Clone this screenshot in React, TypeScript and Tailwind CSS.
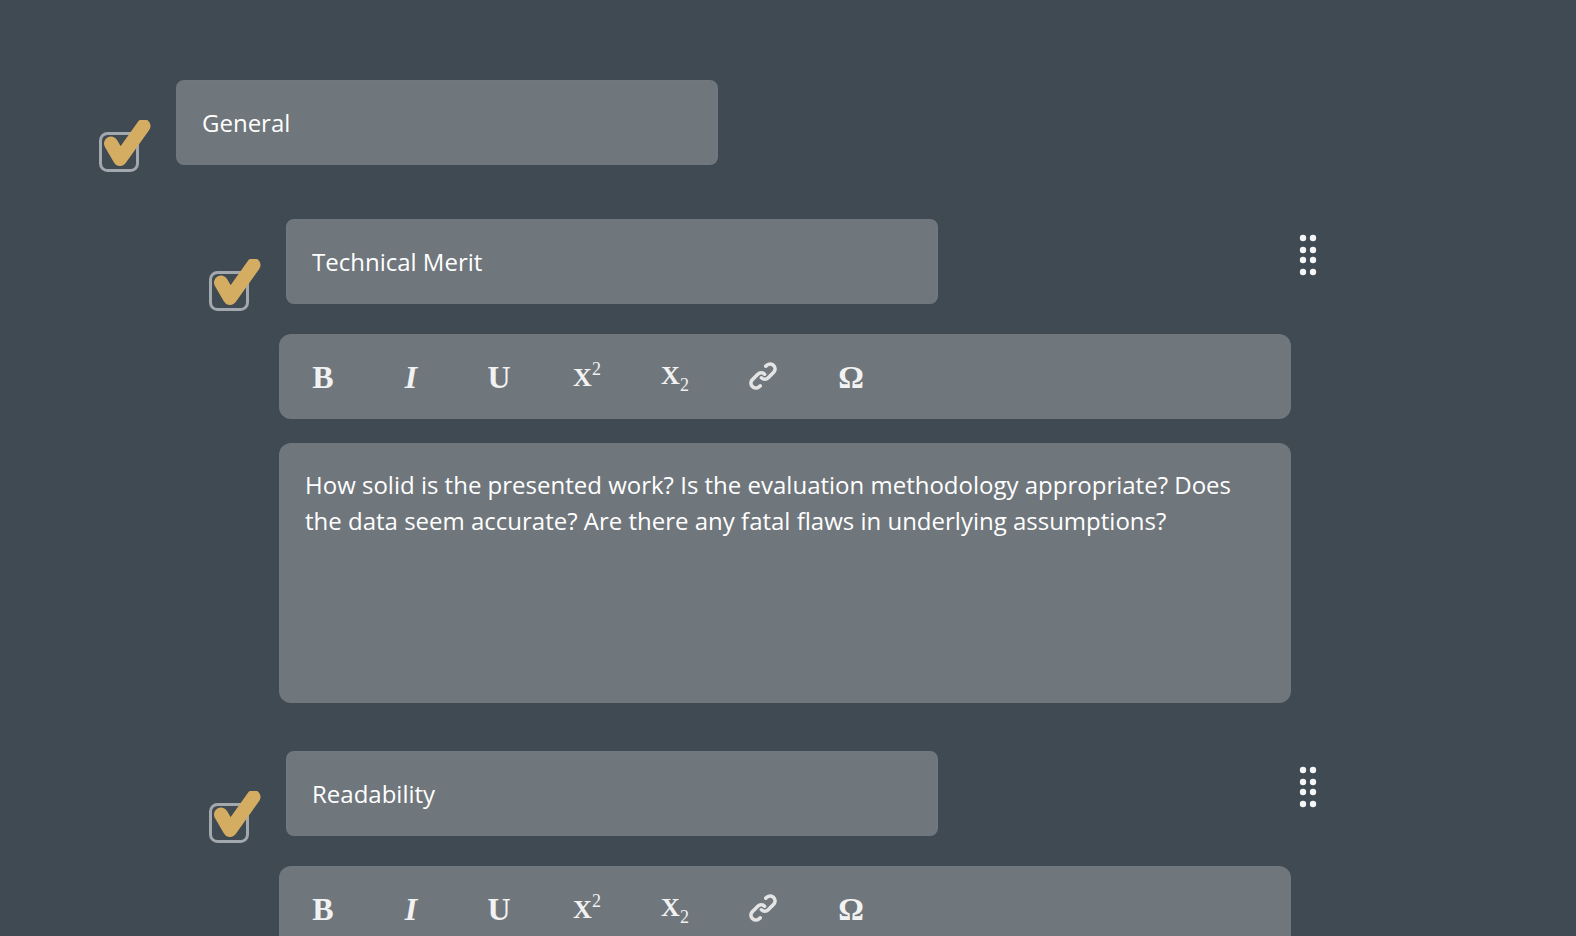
import { useState } from "react";

type Criterion = {
  id: string;
  title: string;
  description: string;
};

const initialCriteria: Criterion[] = [
  {
    id: "technical-merit",
    title: "Technical Merit",
    description:
      "How solid is the presented work? Is the evaluation methodology appropriate? Does the data seem accurate? Are there any fatal flaws in underlying assumptions?",
  },
  { id: "readability", title: "Readability", description: "" },
];

function LinkIcon() {
  return (
    <svg viewBox="0 0 28 28" className="mb-0.5 size-7" fill="none" stroke="#e4e4e4" strokeWidth="3.6" strokeLinecap="round">
      <path d="M16.8 4.2L18 3.1A4.9 4.9 0 0 1 24.9 10L19.2 15.7A4.9 4.9 0 0 1 12.4 15.8" />
      <path d="M11.2 23.8L10 24.9A4.9 4.9 0 0 1 3.1 18L8.8 12.3A4.9 4.9 0 0 1 15.6 12.2" />
    </svg>
  );
}

function CheckToggle({ label }: { label: string }) {
  return (
    <label className="block size-[52px] shrink-0 cursor-pointer">
      <input type="checkbox" defaultChecked aria-label={label} className="peer sr-only" />
      <svg viewBox="0 0 52 52" fill="none" className="size-full [&>path]:invisible peer-checked:[&>path]:visible">
        <rect x="1.5" y="13.5" width="37" height="37" rx="7" stroke="#a3a8ae" strokeWidth="3" />
        <path d="M12 23.5L21 39L44.5 6" stroke="#d4ad62" strokeWidth="14" strokeLinecap="round" strokeLinejoin="round" />
      </svg>
    </label>
  );
}

function TitleInput({ label, value }: { label: string; value: string }) {
  return (
    <input
      type="text"
      aria-label={label}
      defaultValue={value}
      className="h-[85px] w-full rounded-lg border-2 border-[#70777e] bg-[#6f767c] px-6 text-2xl text-white outline-none"
    />
  );
}

function Toolbar() {
  const buttonClass = "flex h-full w-22 items-center justify-center";

  return (
    <div
      role="toolbar"
      aria-label="Formatting"
      className="flex h-[85px] items-center rounded-xl bg-[#6f767c] font-['Liberation_Serif',serif] text-[32px] leading-8 font-bold text-[#f2f2f2]"
    >
      <button type="button" aria-label="Bold" className={buttonClass}>
        B
      </button>
      <button type="button" aria-label="Italic" className={`${buttonClass} italic`}>
        I
      </button>
      <button type="button" aria-label="Underline" className={buttonClass}>
        U
      </button>
      <button type="button" aria-label="Superscript" className={buttonClass}>
        <span className="pt-0.5 text-[26px]">X</span>
        <span className="pb-4 text-lg font-normal">2</span>
      </button>
      <button type="button" aria-label="Subscript" className={buttonClass}>
        <span className="pb-0.5 text-[26px]">X</span>
        <span className="pt-4 text-lg font-normal">2</span>
      </button>
      <button type="button" aria-label="Insert link" className={buttonClass}>
        <LinkIcon />
      </button>
      <button type="button" aria-label="Special character" className={buttonClass}>
        Ω
      </button>
    </div>
  );
}

function DragHandle() {
  return (
    <button type="button" aria-label="Reorder" className="mt-[15px] block shrink-0 cursor-grab">
      <svg viewBox="0 0 18 42" className="h-[42px] w-[18px]" fill="#f4f5f5">
        {[4, 16, 26, 38].map((y) => (
          <g key={y}>
            <circle cx="4" cy={y} r="3.2" />
            <circle cx="14" cy={y} r="3.2" />
          </g>
        ))}
      </svg>
    </button>
  );
}

function CriterionEditor({ criterion }: { criterion: Criterion }) {
  const [description, setDescription] = useState(criterion.description);

  return (
    <section className="flex items-start">
      <div className="mt-10 mr-[18px]">
        <CheckToggle label={`Include ${criterion.title}`} />
      </div>
      <div className="w-full max-w-[1012px]">
        <div className="max-w-[659px] pl-[7px]">
          <TitleInput label="Criterion name" value={criterion.title} />
        </div>
        <div className="mt-[30px]">
          <Toolbar />
        </div>
        <textarea
          aria-label="Criterion description"
          value={description}
          onChange={(e) => setDescription(e.target.value)}
          className="mt-6 block h-[260px] w-full resize-none rounded-xl bg-[#6f767c] px-[26px] py-6 text-2xl leading-9 text-white outline-none"
        />
      </div>
      <div className="ml-2">
        <DragHandle />
      </div>
    </section>
  );
}

export default function App() {
  return (
    <main className="h-screen overflow-y-auto bg-[#404a52] pt-20 pr-6 pl-[99px] font-['Open_Sans',sans-serif] antialiased [scrollbar-width:none]">
      <div className="flex items-start gap-[25px]">
        <div className="mt-10">
          <CheckToggle label="Include General" />
        </div>
        <div className="w-full max-w-[542px]">
          <TitleInput label="Section name" value="General" />
        </div>
      </div>
      <div className="mt-[47px] space-y-12 pb-12 pl-[110px]">
        {initialCriteria.map((criterion) => (
          <CriterionEditor key={criterion.id} criterion={criterion} />
        ))}
      </div>
    </main>
  );
}
